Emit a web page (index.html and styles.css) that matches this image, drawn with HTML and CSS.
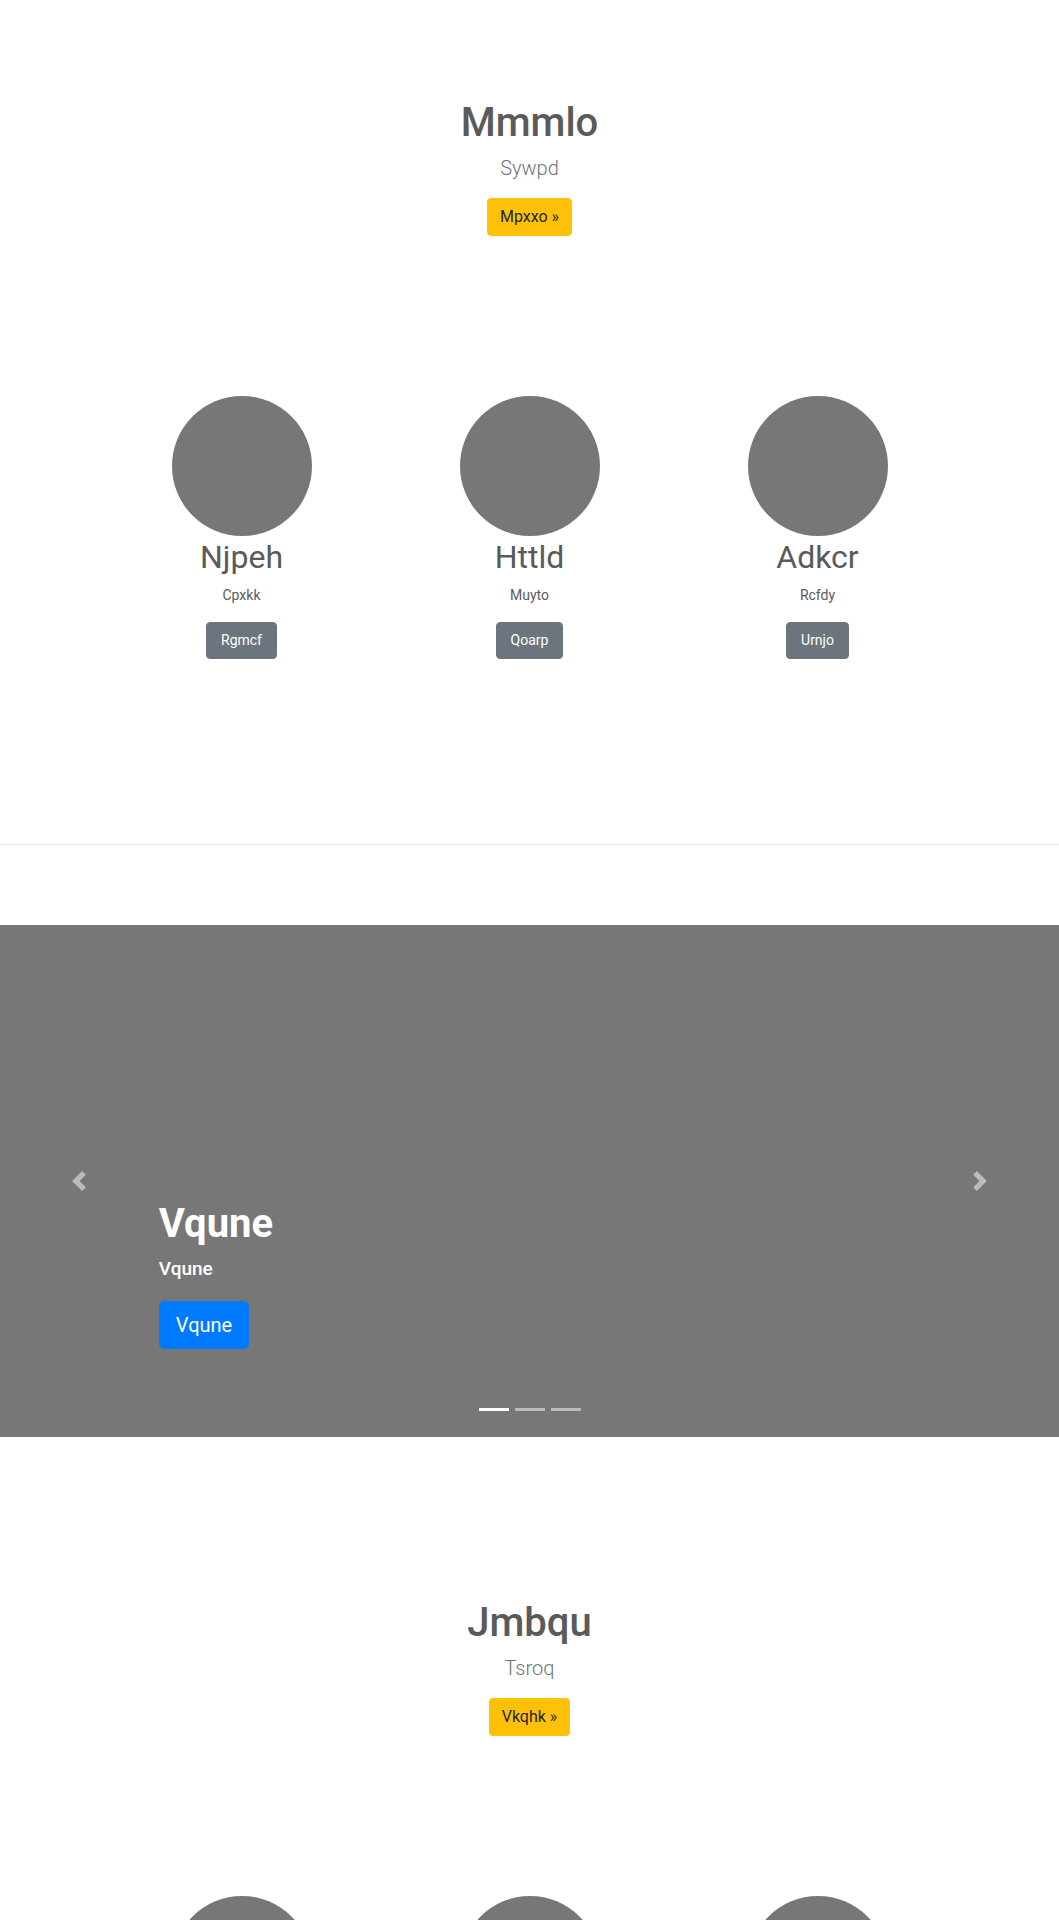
FILE: index.html
```html
<!DOCTYPE html>
<html lang="en">
<head>
<meta charset="utf-8">
<title>Mmmlo</title>
<link rel="stylesheet" href="styles.css">
</head>
<body>
<main class="page">
  <section class="hero">
    <h1 class="hero-title">Mmmlo</h1>
    <p class="lead">Sywpd</p>
    <div class="hero-action"><a class="btn btn-warning" href="#">Mpxxo &raquo;</a></div>
  </section>

  <section class="marketing">
    <div class="feature">
      <div class="circle"></div>
      <h2 class="feature-title">Njpeh</h2>
      <p class="feature-text">Cpxkk</p>
      <a class="btn btn-secondary" href="#">Rgmcf</a>
    </div>
    <div class="feature">
      <div class="circle"></div>
      <h2 class="feature-title">Httld</h2>
      <p class="feature-text">Muyto</p>
      <a class="btn btn-secondary" href="#">Qoarp</a>
    </div>
    <div class="feature">
      <div class="circle"></div>
      <h2 class="feature-title">Adkcr</h2>
      <p class="feature-text">Rcfdy</p>
      <a class="btn btn-secondary" href="#">Urnjo</a>
    </div>
  </section>

  <hr class="divider">

  <section class="carousel">
    <div class="caption">
      <h1 class="caption-title">Vqune</h1>
      <p class="caption-text">Vqune</p>
      <a class="btn btn-primary btn-lg" href="#">Vqune</a>
    </div>
    <a class="control control-prev" href="#" aria-label="Previous">
      <svg class="control-icon" viewBox="0 0 8 8" width="20" height="20"><path fill="#fff" d="M5.25 0l-4 4 4 4 1.5-1.5L4.25 4l2.5-2.5L5.25 0z"/></svg>
    </a>
    <a class="control control-next" href="#" aria-label="Next">
      <svg class="control-icon" viewBox="0 0 8 8" width="20" height="20"><path fill="#fff" d="M2.75 0l-1.5 1.5L3.75 4l-2.5 2.5L2.75 8l4-4-4-4z"/></svg>
    </a>
    <ol class="indicators">
      <li class="indicator active"></li>
      <li class="indicator"></li>
      <li class="indicator"></li>
    </ol>
  </section>

  <section class="hero">
    <h1 class="hero-title">Jmbqu</h1>
    <p class="lead">Tsroq</p>
    <div class="hero-action"><a class="btn btn-warning" href="#">Vkqhk &raquo;</a></div>
  </section>

  <section class="marketing">
    <div class="feature"><div class="circle"></div></div>
    <div class="feature"><div class="circle"></div></div>
    <div class="feature"><div class="circle"></div></div>
  </section>
</main>
</body>
</html>
```

FILE: styles.css
```css
* { box-sizing: border-box; }

html, body {
  margin: 0;
  padding: 0;
  background: #fff;
}

body {
  font-family: Roboto, "Liberation Sans", Arial, sans-serif;
  font-size: 16px;
  line-height: 1.5;
  color: #5a5a5a;
}

.page {
  display: flex;
  flex-direction: column;
}

/* hero */
.hero {
  padding-top: 99px;
  text-align: center;
}

.hero-title {
  margin: 0 0 6px;
  font-size: 40px;
  line-height: 48px;
  font-weight: 500;
  color: #5a5a5a;
}

.lead {
  margin: 0 0 15px;
  font-size: 20px;
  line-height: 30px;
  font-weight: 300;
  color: #6c757d;
}

.hero-action {
  display: flex;
  justify-content: center;
}

/* buttons */
.btn {
  display: inline-block;
  text-decoration: none;
  border: 1px solid transparent;
  border-radius: 4px;
  padding: 6px 12px;
  font-size: 16px;
  line-height: 24px;
  font-weight: 400;
}

.btn-warning {
  background: #ffc107;
  border-color: #ffc107;
  color: #212529;
}

.btn-secondary {
  background: #6c757d;
  border-color: #6c757d;
  color: #fff;
  font-size: 14px;
  line-height: 21px;
  padding: 7px 14px;
}

.btn-primary {
  background: #007bff;
  border-color: #007bff;
  color: #fff;
}

.btn-lg {
  padding: 8px 16px;
  font-size: 20px;
  line-height: 30px;
  border-radius: 5px;
}

/* marketing */
.marketing {
  width: 864px;
  margin: 160px auto 0;
  display: grid;
  grid-template-columns: repeat(3, 1fr);
}

.feature {
  display: flex;
  flex-direction: column;
  align-items: center;
  text-align: center;
}

.circle {
  width: 140px;
  height: 140px;
  border-radius: 50%;
  background: #777;
}

.feature-title {
  margin: 2px 0 0;
  font-size: 32px;
  line-height: 38px;
  font-weight: 400;
  color: #5a5a5a;
}

.feature-text {
  margin: 9px 0 0;
  font-size: 14px;
  line-height: 21px;
}

.feature .btn {
  margin-top: 16px;
}

.divider {
  margin: 185px 0 0;
  border: 0;
  border-top: 1px solid #e5e5e5;
  height: 0;
}

/* carousel */
.carousel {
  position: relative;
  margin-top: 80px;
  margin-bottom: 63px;
  height: 512px;
  background: #777;
}

.caption {
  position: absolute;
  left: 15%;
  right: 15%;
  bottom: 88px;
  color: #fff;
  text-align: left;
  z-index: 2;
}

.caption-title {
  margin: 0 0 7px;
  font-size: 40px;
  line-height: 48px;
  font-weight: 700;
}

.caption-text {
  margin: 0 0 18px;
  font-size: 19px;
  line-height: 28px;
  font-weight: 500;
}

.control {
  position: absolute;
  top: 0;
  bottom: 0;
  width: 15%;
  display: flex;
  align-items: center;
  justify-content: center;
  opacity: 0.5;
}

.control-prev { left: 0; }
.control-next { right: 0; }

.control-icon {
  display: block;
  width: 20px;
  height: 20px;
}

.indicators {
  position: absolute;
  left: 0;
  right: 0;
  bottom: 26px;
  margin: 0;
  padding: 0;
  list-style: none;
  display: flex;
  justify-content: center;
  gap: 6px;
}

.indicator {
  width: 30px;
  height: 3px;
  background: #fff;
  opacity: 0.5;
}

.indicator.active {
  opacity: 1;
}
```
